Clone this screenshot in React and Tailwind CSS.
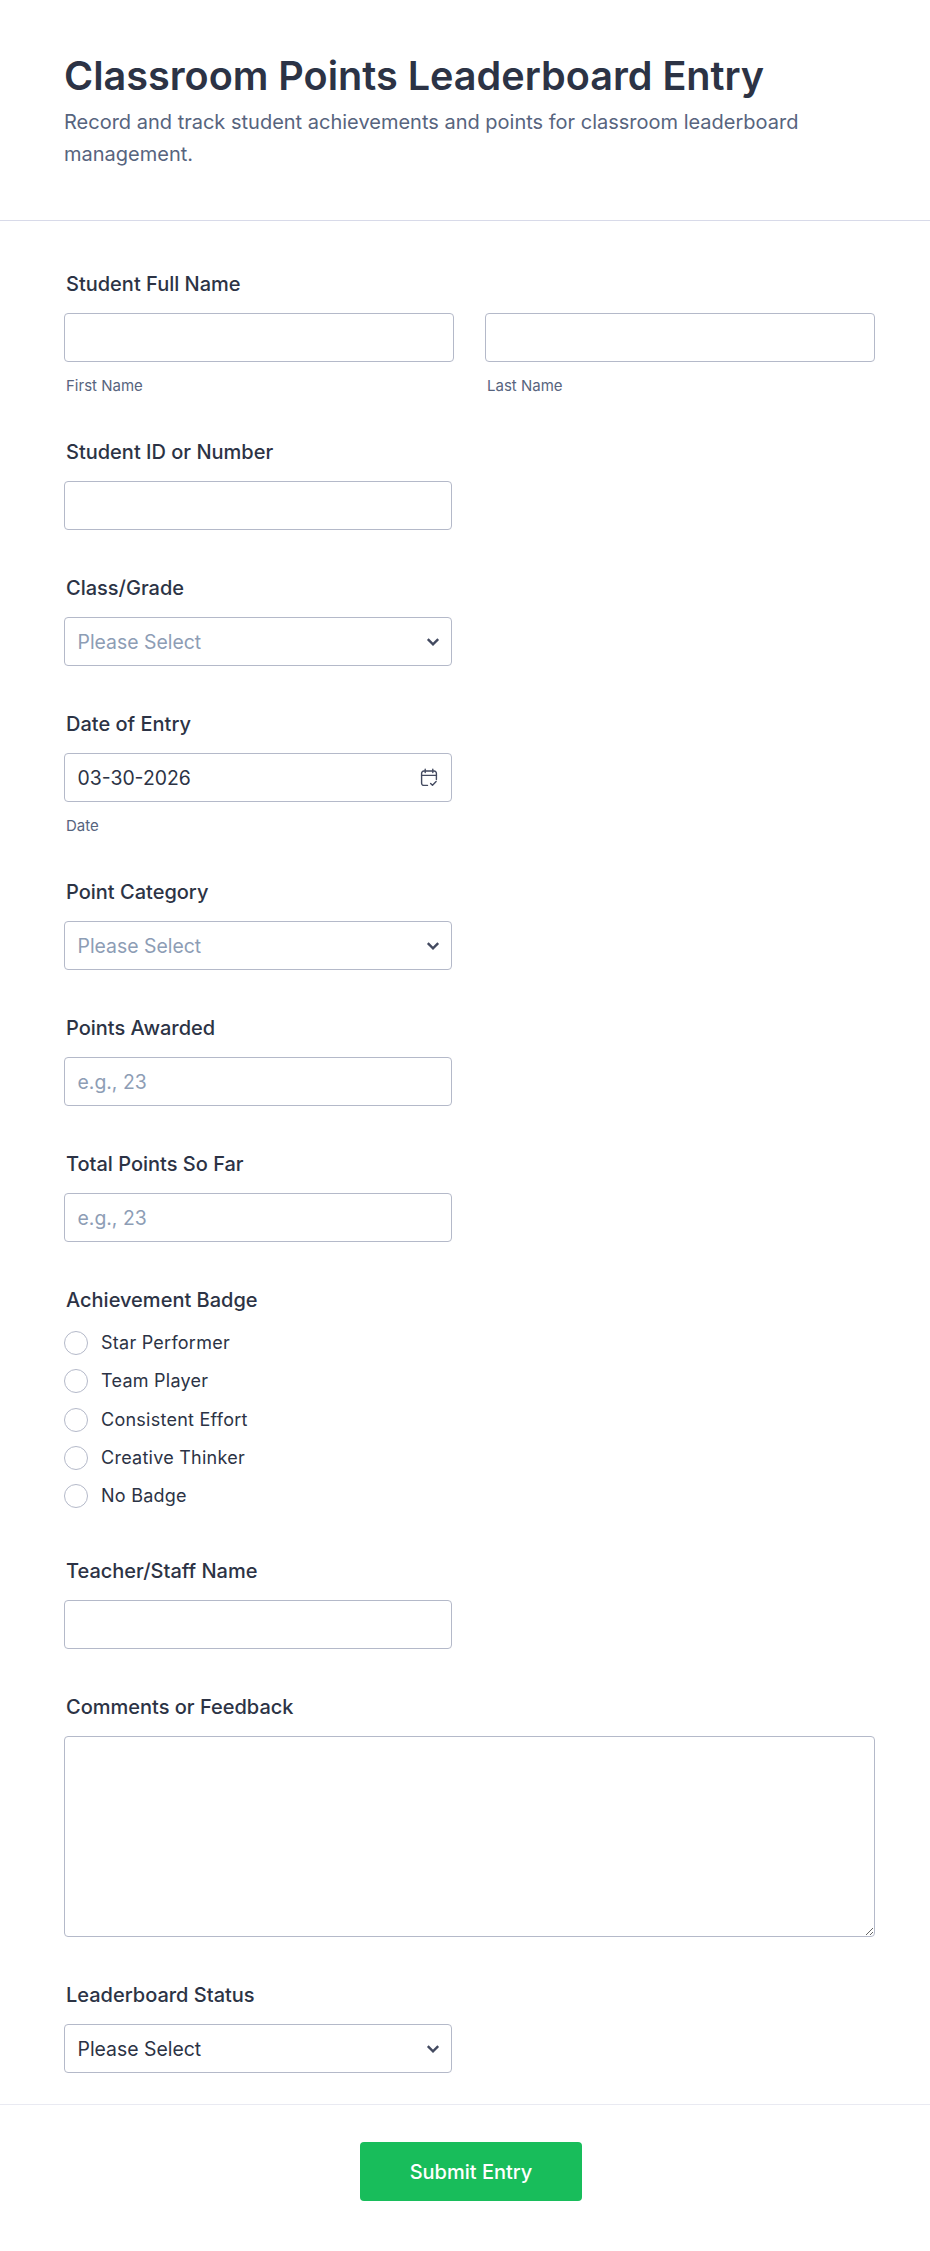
const inputCls = "block h-[49px] border border-[#b4b9c9] rounded-[4px] bg-white px-[12.5px] text-[19.4px] text-[#2c3345] placeholder:text-[#8d9db5] outline-none";

function Label({ children, gap = "mb-[17px]" }) {
  return <div className={"h-[24px] pl-[2px] text-[20px] leading-[24px] font-medium text-[#2c3345] " + gap}>{children}</div>;
}

function Sub({ children }) {
  return <div className="h-[32px] pt-[15px] pl-[2px] text-[15px] leading-[18px] text-[#57647e]">{children}</div>;
}

function Chevron() {
  return (
    <svg width="14" height="10" viewBox="0 0 14 10" fill="none" className="shrink-0">
      <path d="M1.8 2.2 L7 7.4 L12.2 2.2" stroke="#434a60" strokeWidth="2.4" />
    </svg>
  );
}

function Select({ value, placeholder }) {
  return (
    <div className="flex items-center justify-between h-[49px] w-[388px] border border-[#b4b9c9] rounded-[4px] bg-white pl-[12.5px] pr-[11px]">
      <span className={"pt-[2px] text-[19.4px] " + (placeholder ? "text-[#8d9db5]" : "text-[#2c3345]")}>{value}</span>
      <Chevron />
    </div>
  );
}

function CalendarCheck() {
  return (
    <svg width="18" height="19" viewBox="0 0 18 19" fill="none" stroke="#434a60" strokeWidth="1.4" strokeLinecap="round" strokeLinejoin="round">
      <path d="M7.5 17.4H3.8a2.2 2.2 0 0 1-2.2-2.2V5.2A2.2 2.2 0 0 1 3.8 3h10.4a2.2 2.2 0 0 1 2.2 2.2v6.3" />
      <path d="M1.6 7.4h14.8" />
      <path d="M5.2 1.2v3.4M12.8 1.2v3.4" />
      <path d="M10.6 15.4l1.9 1.9 3.6-3.8" />
    </svg>
  );
}

function Radio({ label }) {
  return (
    <div className="flex items-center h-[24px] mb-[14.25px]">
      <span className="w-[24px] h-[24px] rounded-full border border-[#b4b9c9] bg-white shrink-0" />
      <span className="ml-[13px] pb-[1px] text-[18px] tracking-[0.25px] text-[#2c3345]">{label}</span>
    </div>
  );
}

export default function App() {
  return (
    <div className="w-[930px] min-h-[2251px] bg-white font-['Inter',sans-serif]">
      <header className="h-[221px] border-b border-[#d8dae9] pl-[64px] pr-[80px] pt-[52px]">
        <h1 className="text-[39.6px] leading-[48px] font-semibold text-[#2c3345]">Classroom Points Leaderboard Entry</h1>
        <p className="mt-[6px] text-[20px] leading-[32px] text-[#57647e]">Record and track student achievements and points for classroom leaderboard management.</p>
      </header>

      <main className="pl-[64px] pr-[55px] pt-[51px]">
        <section className="mb-[46px]">
          <Label>Student Full Name</Label>
          <div className="grid grid-cols-2 gap-[31px]">
            <div>
              <input className={inputCls + " w-full"} />
              <Sub>First Name</Sub>
            </div>
            <div>
              <input className={inputCls + " w-full"} />
              <Sub>Last Name</Sub>
            </div>
          </div>
        </section>

        <section className="mb-[46px]">
          <Label>Student ID or Number</Label>
          <input className={inputCls + " w-[388px]"} />
        </section>

        <section className="mb-[46px]">
          <Label>Class/Grade</Label>
          <Select value="Please Select" placeholder />
        </section>

        <section className="mb-[46px]">
          <Label>Date of Entry</Label>
          <div className="flex items-center justify-between h-[49px] w-[388px] border border-[#b4b9c9] rounded-[4px] bg-white pl-[12.5px] pr-[13px]">
            <span className="pt-[2px] text-[19.4px] text-[#2c3345]">03-30-2026</span>
            <CalendarCheck />
          </div>
          <Sub>Date</Sub>
        </section>

        <section className="mb-[46px]">
          <Label>Point Category</Label>
          <Select value="Please Select" placeholder />
        </section>

        <section className="mb-[46px]">
          <Label>Points Awarded</Label>
          <input className={inputCls + " w-[388px]"} placeholder="e.g., 23" />
        </section>

        <section className="mb-[46px]">
          <Label>Total Points So Far</Label>
          <input className={inputCls + " w-[388px]"} placeholder="e.g., 23" />
        </section>

        <section className="mb-[51px]">
          <Label gap="mb-[19px]">Achievement Badge</Label>
          <Radio label="Star Performer" />
          <Radio label="Team Player" />
          <Radio label="Consistent Effort" />
          <Radio label="Creative Thinker" />
          <Radio label="No Badge" />
        </section>

        <section className="mb-[46px]">
          <Label>Teacher/Staff Name</Label>
          <input className={inputCls + " w-[388px]"} />
        </section>

        <section className="mb-[46px]">
          <Label>Comments or Feedback</Label>
          <textarea className="block w-full h-[201px] border border-[#b4b9c9] rounded-[4px] bg-white outline-none" />
        </section>

        <section>
          <Label>Leaderboard Status</Label>
          <Select value="Please Select" />
        </section>
      </main>

      <footer className="mt-[31px] border-t border-[#e9eaf2] pt-[37px] pl-[12px] flex justify-center">
        <button className="w-[222px] h-[59px] rounded-[4px] bg-[#18bd5b] text-white text-[20px] font-medium">Submit Entry</button>
      </footer>
    </div>
  );
}
